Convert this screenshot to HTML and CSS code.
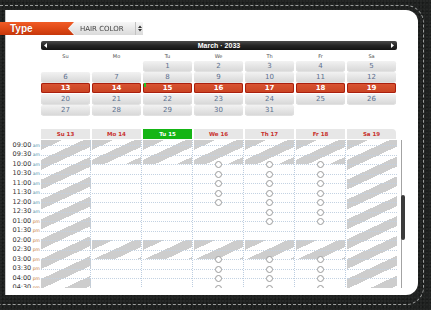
FILE: index.html
```html
<!DOCTYPE html>
<html>
<head>
<meta charset="utf-8">
<link rel="stylesheet" href="styles.css">
</head>
<body>
<div class="stitch">
<div class="panel">
  <div class="typebar">
    <div class="ribbon">Type</div>
    <div class="selwrap">
      <div class="select">
        <span class="seltext">HAIR COLOR</span>
        <span class="selarrows"><svg width="4" height="7" viewBox="0 0 4 7"><path d="M0 3L2 0.5L4 3Z M0 4L2 6.5L4 4Z" fill="#333"/></svg></span>
      </div>
    </div>
  </div>

  <div class="cal">
    <div class="monthbar">
      <svg class="arr" width="3" height="5" viewBox="0 0 3 5"><path d="M3 0V5L0 2.5Z" fill="#fff"/></svg>
      <span class="mtitle">March · 2033</span>
      <svg class="arr" width="3" height="5" viewBox="0 0 3 5"><path d="M0 0V5L3 2.5Z" fill="#fff"/></svg>
    </div>
    <div class="wd"><span>Su</span><span>Mo</span><span>Tu</span><span>We</span><span>Th</span><span>Fr</span><span>Sa</span></div>
    <div class="days">
      <div></div><div></div><div class="d">1</div><div class="d">2</div><div class="d">3</div><div class="d">4</div><div class="d">5</div>
      <div class="d">6</div><div class="d">7</div><div class="d">8</div><div class="d">9</div><div class="d">10</div><div class="d">11</div><div class="d">12</div>
      <div class="d sel">13</div><div class="d sel">14</div><div class="d sel today">15</div><div class="d sel">16</div><div class="d sel">17</div><div class="d sel">18</div><div class="d sel">19</div>
      <div class="d">20</div><div class="d">21</div><div class="d">22</div><div class="d">23</div><div class="d">24</div><div class="d">25</div><div class="d">26</div>
      <div class="d">27</div><div class="d">28</div><div class="d">29</div><div class="d">30</div><div class="d">31</div><div></div><div></div>
    </div>
  </div>

  <div class="tt-head">
    <div class="h">Su 13</div><div class="h">Mo 14</div><div class="h now">Tu 15</div><div class="h">We 16</div><div class="h">Th 17</div><div class="h">Fr 18</div><div class="h last">Sa 19</div>
  </div>

  <div class="tt-body">
    <div class="labels">
      <div class="lab">09:00<small class="am">am</small></div>
      <div class="lab">09:30<small class="am">am</small></div>
      <div class="lab">10:00<small class="am">am</small></div>
      <div class="lab">10:30<small class="am">am</small></div>
      <div class="lab">11:00<small class="am">am</small></div>
      <div class="lab">11:30<small class="am">am</small></div>
      <div class="lab">12:00<small class="am">am</small></div>
      <div class="lab">12:30<small class="am">am</small></div>
      <div class="lab">01:00<small class="pm">pm</small></div>
      <div class="lab">01:30<small class="pm">pm</small></div>
      <div class="lab">02:00<small class="pm">pm</small></div>
      <div class="lab">02:30<small class="pm">pm</small></div>
      <div class="lab">03:00<small class="pm">pm</small></div>
      <div class="lab">03:30<small class="pm">pm</small></div>
      <div class="lab">04:00<small class="pm">pm</small></div>
      <div class="lab">04:30<small class="pm">pm</small></div>
    </div>
    <div class="cols">
      <!-- Su -->
      <div class="col hatch">
        <div class="r p"></div>
        <div class="r"></div><div class="r"></div><div class="r"></div><div class="r"></div>
        <div class="r"></div><div class="r"></div><div class="r"></div><div class="r"></div>
        <div class="r"></div><div class="r"></div><div class="r"></div><div class="r"></div>
        <div class="r"></div><div class="r"></div><div class="r"></div><div class="r"></div>
      </div>
      <!-- Mo -->
      <div class="col">
        <div class="hatch"><div class="r p"></div><div class="r"></div><div class="r"></div></div>
        <div class="r"></div><div class="r"></div><div class="r"></div><div class="r"></div>
        <div class="r"></div><div class="r"></div><div class="r"></div><div class="r"></div>
        <div class="hatch"><div class="r"></div><div class="r"></div></div>
        <div class="r"></div><div class="r"></div><div class="r"></div><div class="r"></div>
      </div>
      <!-- Tu -->
      <div class="col">
        <div class="hatch"><div class="r p"></div><div class="r"></div><div class="r"></div></div>
        <div class="r"></div><div class="r"></div><div class="r"></div><div class="r"></div>
        <div class="r"></div><div class="r"></div><div class="r"></div><div class="r"></div>
        <div class="hatch"><div class="r"></div><div class="r"></div></div>
        <div class="r"></div><div class="r"></div><div class="r"></div><div class="r"></div>
      </div>
      <!-- We -->
      <div class="col">
        <div class="hatch"><div class="r p"></div><div class="r"></div><div class="r"></div></div>
        <div class="r"><i class="c"></i></div><div class="r"><i class="c"></i></div><div class="r"><i class="c"></i></div><div class="r"><i class="c"></i></div>
        <div class="r"><i class="c"></i></div><div class="r"></div><div class="r"></div><div class="r"></div>
        <div class="hatch"><div class="r"></div><div class="r"></div></div>
        <div class="r"><i class="c"></i></div><div class="r"><i class="c"></i></div><div class="r"><i class="c"></i></div><div class="r"><i class="c"></i></div>
      </div>
      <!-- Th -->
      <div class="col">
        <div class="hatch"><div class="r p"></div><div class="r"></div><div class="r"></div></div>
        <div class="r"><i class="c"></i></div><div class="r"><i class="c"></i></div><div class="r"><i class="c"></i></div><div class="r"><i class="c"></i></div>
        <div class="r"><i class="c"></i></div><div class="r"><i class="c"></i></div><div class="r"><i class="c"></i></div><div class="r"></div>
        <div class="hatch"><div class="r"></div><div class="r"></div></div>
        <div class="r"><i class="c"></i></div><div class="r"><i class="c"></i></div><div class="r"><i class="c"></i></div><div class="r"><i class="c"></i></div>
      </div>
      <!-- Fr -->
      <div class="col">
        <div class="hatch"><div class="r p"></div><div class="r"></div><div class="r"></div></div>
        <div class="r"><i class="c"></i></div><div class="r"><i class="c"></i></div><div class="r"><i class="c"></i></div><div class="r"><i class="c"></i></div>
        <div class="r"><i class="c"></i></div><div class="r"><i class="c"></i></div><div class="r"><i class="c"></i></div><div class="r"></div>
        <div class="hatch"><div class="r"></div><div class="r"></div></div>
        <div class="r"><i class="c"></i></div><div class="r"><i class="c"></i></div><div class="r"><i class="c"></i></div><div class="r"><i class="c"></i></div>
      </div>
      <!-- Sa -->
      <div class="col last hatch">
        <div class="r p"></div>
        <div class="r"></div><div class="r"></div><div class="r"></div><div class="r"></div>
        <div class="r"></div><div class="r"></div><div class="r"></div><div class="r"></div>
        <div class="r"></div><div class="r"></div><div class="r"></div><div class="r"></div>
        <div class="r"></div><div class="r"></div><div class="r"></div><div class="r"></div>
      </div>
    </div>
    <div class="track"><div class="thumb"></div></div>
  </div>
</div>
</div>
</body>
</html>
```

FILE: styles.css
```css
* { box-sizing: border-box; }
html, body { margin: 0; padding: 0; }
body {
  width: 431px;
  height: 310px;
  overflow: hidden;
  background-color: #1f2120;
  background-image:
    radial-gradient(circle at 30% 40%, rgba(255,255,255,0.03) 0 1px, transparent 1.5px),
    radial-gradient(circle at 70% 80%, rgba(0,0,0,0.25) 0 1px, transparent 1.5px);
  background-size: 3px 3px, 4px 4px;
  font-family: "DejaVu Sans", sans-serif;
}

.stitch {
  margin: 5px 7px 0 -10px;
  border: 1px dashed #9a9c9b;
  border-radius: 0 18px 18px 0;
  padding: 4px 5px 9px 14px;
}

.panel {
  height: 285px;
  background: #fff;
  border-radius: 0 12px 12px 0;
  box-shadow: inset 1px 0 0 #c9c9c9;
  padding-top: 12px;
}

/* type selector */
.typebar {
  display: flex;
  margin-left: -5px;
  height: 13px;
}
.ribbon {
  width: 75px;
  height: 13px;
  background: linear-gradient(#f15c26, #de4815 55%, #c6370b);
  color: #fff;
  font: bold 10px/13px "Liberation Sans", sans-serif;
  padding-left: 10px;
  text-shadow: 0 0 1px rgba(120,20,0,0.6);
}
.selwrap {
  margin-left: -6px;
  filter: drop-shadow(-1px 0 0 #f4f4f4);
}
.select {
  width: 74px;
  height: 13px;
  clip-path: polygon(6px 0, 100% 0, 100% 100%, 6px 100%, 0 50%);
  background: linear-gradient(#f7f7f7, #dadada);
  display: flex;
  align-items: center;
}
.seltext {
  flex: 1;
  padding-left: 11px;
  font-size: 7px;
  color: #454545;
  white-space: nowrap;
}
.selarrows {
  width: 8px;
  height: 100%;
  border-left: 1px solid #c2c2c2;
  display: flex;
  align-items: center;
  justify-content: center;
}

/* month calendar */
.cal {
  margin-left: 36px;
  width: 356px;
}
.monthbar {
  margin-top: 6px;
  height: 9px;
  border-radius: 2px;
  background: linear-gradient(#4a4a4a, #262626 50%, #141414);
  display: flex;
  align-items: center;
  justify-content: space-between;
  padding: 0 3px;
}
.mtitle {
  color: #fff;
  font: bold 7px/9px "Liberation Sans", sans-serif;
  white-space: nowrap;
}
.arr { display: block; }

.wd {
  display: grid;
  grid-template-columns: repeat(7, 49px);
  column-gap: 2px;
  height: 11px;
  align-items: center;
  text-align: center;
  font-size: 5px;
  color: #4a4a4a;
}
.days {
  display: grid;
  grid-template-columns: repeat(7, 49px);
  grid-auto-rows: 10px;
  gap: 1px 2px;
}
.d {
  position: relative;
  background: linear-gradient(#f2f2f2, #d8d8d8);
  border-radius: 2px;
  box-shadow: 0 0.5px 0.5px #c4c4c4;
  font-size: 7px;
  line-height: 10px;
  color: #5b6f8e;
  text-align: center;
}
.d.sel {
  background: linear-gradient(#da5533, #c84221);
  box-shadow: inset 0 0 0 1px #a91f0e;
  color: #fff;
  font-weight: bold;
}
.d.today::before {
  content: "";
  position: absolute;
  left: 1px;
  top: 0;
  width: 2px;
  height: 4px;
  background: #22c322;
}

/* timetable */
.tt-head {
  margin-left: 36px;
  margin-top: 14px;
  display: grid;
  grid-template-columns: repeat(7, 49px);
  column-gap: 2px;
  height: 10px;
}
.h {
  background: #e7e7e7;
  color: #c8302c;
  font: bold 5.5px/10px "DejaVu Sans", sans-serif;
  text-align: center;
  white-space: nowrap;
}
.h.now { background: #15b515; color: #fff; }
.h.last { border-top-right-radius: 4px; }

.tt-body {
  margin-top: 1px;
  height: 148px;
  overflow: hidden;
  display: flex;
  align-items: flex-start;
}
.labels { width: 36px; flex: none; }
.lab {
  height: 9.5px;
  display: flex;
  align-items: center;
  justify-content: flex-end;
  padding-right: 1px;
  font-size: 6.5px;
  color: #333;
  white-space: nowrap;
}
.lab small {
  font-size: 4.5px;
  margin-left: 1.5px;
  margin-top: 1px;
}
.lab .am { color: #4b8ea8; }
.lab .pm { color: #c67a3a; }

.cols {
  display: grid;
  grid-template-columns: repeat(7, 50px);
  column-gap: 1px;
  width: 356px;
  flex: none;
  align-items: start;
}
.col { border-right: 1px dotted #bccde0; }
.col.last { border-right: none; }
.hatch {
  background: repeating-linear-gradient(155deg, #cdcdcd 0 9px, #ffffff 9px 18px);
}
.r {
  height: 9.5px;
  border-top: 1px dotted #c3d2e2;
  display: flex;
  justify-content: center;
}
.r.p { height: 5px; border-top: none; }
.c {
  display: block;
  width: 7px;
  height: 7px;
  margin-top: -4px;
  border: 1px solid #9c9c9c;
  border-radius: 50%;
  background: #fff;
}

.track {
  width: 4px;
  height: 148px;
  margin-left: 4px;
  flex: none;
  padding-top: 55px;
  background: linear-gradient(#a3a3a3, #a3a3a3) left top / 1px 100% no-repeat;
}
.thumb {
  height: 45px;
  background: #3b3b3b;
  border-radius: 2px;
}
```
